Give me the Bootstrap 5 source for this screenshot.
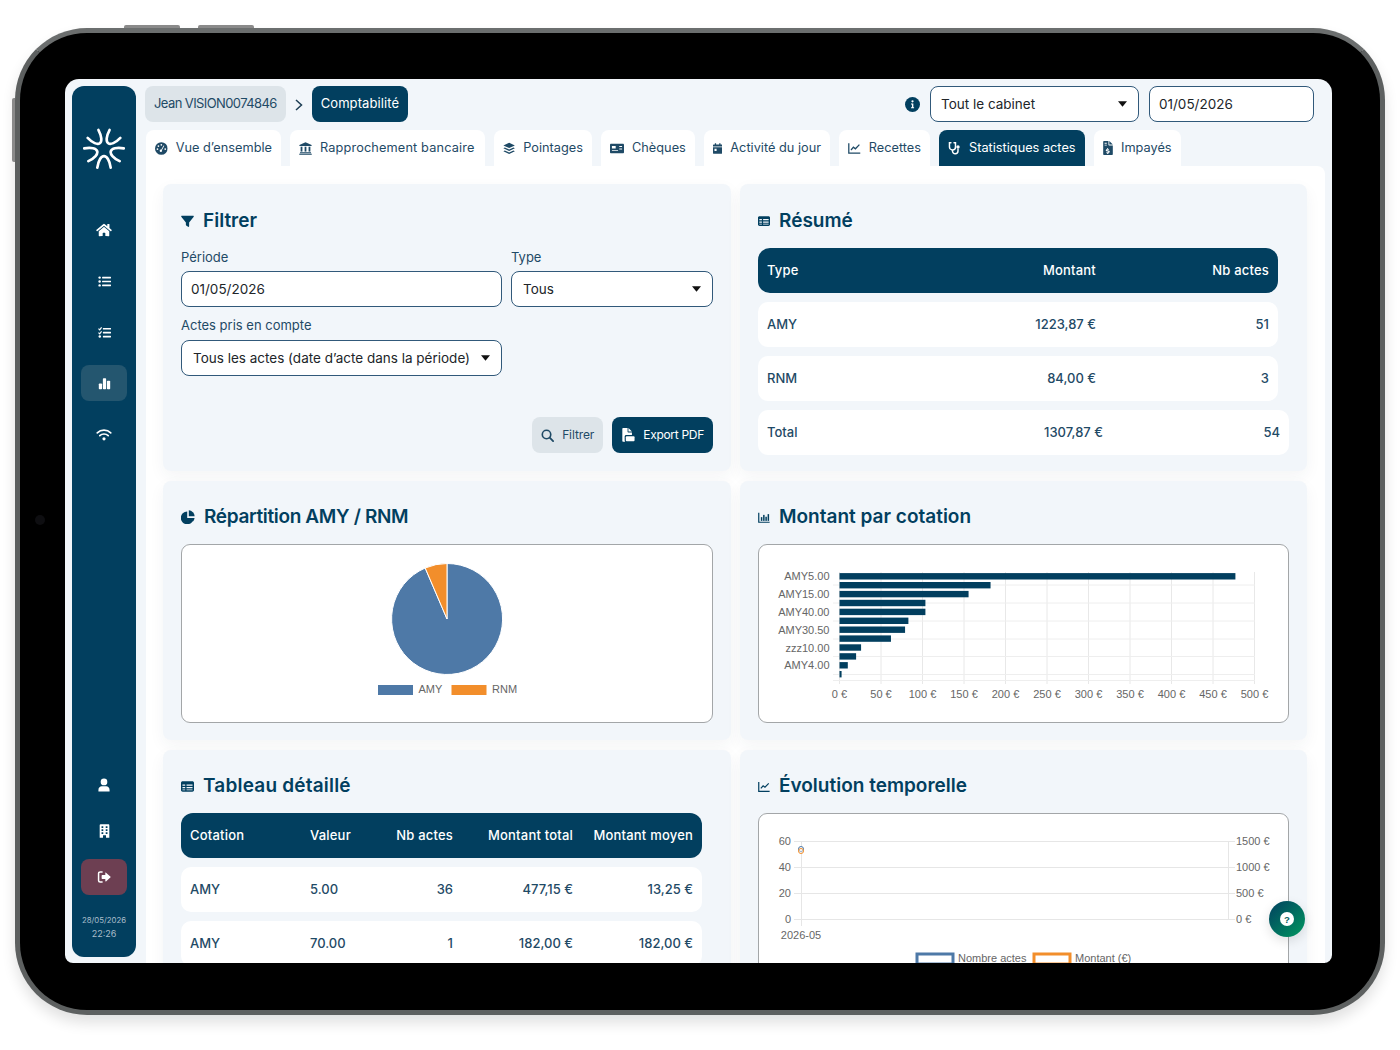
<!DOCTYPE html>
<html lang="fr">
<head>
  <meta charset="UTF-8" />
  <meta name="viewport" content="width=device-width, initial-scale=1.0" />
  <title>Comptabilité - Statistiques actes</title>
  <link href="https://cdn.jsdelivr.net/npm/bootstrap@5.3.3/dist/css/bootstrap.min.css" rel="stylesheet" />
  <style>
    :root { --navy: #023f5f; --ink: #1f4a66; --pale: #f2f6fa; }
    html, body { height: 100%; overflow: hidden; background: #fff; }
    body { font-family: Inter, "Open Sans", sans-serif; font-size: 13px; color: var(--ink); padding: 28px 0 0 15px; }

    /* tablet frame */
    .tablet { position: relative; width: 1370px; height: 987px; padding: 46px 48px 47px 45px; background: #000; border: 5px solid #5d6060; border-top-color: #6b6e6e; border-radius: 72px; box-shadow: 0 8px 14px rgba(0,0,0,.12); }
    .tablet::before, .tablet::after { content: ""; position: absolute; top: -8px; width: 56px; height: 3px; background: #8a8a8a; border-radius: 2px 2px 0 0; }
    .tablet::before { left: 104px; }
    .tablet::after { left: 178px; }
    .side-key { position: absolute; left: -8px; top: 65px; width: 3px; height: 64px; background: #8a8a8a; border-radius: 2px 0 0 2px; }
    .camera-dot { position: absolute; left: 15px; top: 482px; width: 10px; height: 10px; border-radius: 50%; background: #0e0e11; }
    .screen { position: relative; display: flex; height: 884px; width: 1267px; overflow: hidden; background: var(--pale); border-radius: 14px 14px 8px 8px; }

    /* sidebar */
    .rail { flex: 0 0 64px; width: 64px; height: 871px; margin: 7px 0 0 7px; padding: 42px 9px 0; background: var(--navy); border-radius: 12px; color: #fff; }
    .rail-logo { display: block; width: 42px; height: 42px; margin: 0 auto 42px; }
    .rail-btn { display: flex; align-items: center; justify-content: center; height: 36px; border-radius: 8px; color: #fff; }
    .rail-top .rail-btn { margin-bottom: 15px; }
    .rail-low { margin-top: 315px; }
    .rail-low .rail-btn { margin-bottom: 10px; }
    .rail-btn.is-on { background: #24566f; }
    .rail-btn.is-out { background: #6d3f52; }
    .rail-time { margin-top: 19px; text-align: center; font-size: 7.8px; line-height: 13px; color: #a9bdca; }
    .rail-time span { display: block; font-size: 9px; }

    /* header */
    .work { flex: 1 1 auto; min-width: 0; margin-left: 9px; padding-top: 7px; }
    .crumbs { height: 36px; padding-right: 18px; }
    .chip { display: flex; align-items: center; height: 36px; padding: 0 9px; border-radius: 8px; font-size: 13px; white-space: nowrap; }
    .chip-user { background: #dde4e9; letter-spacing: -.6px; }
    .chip-here { background: var(--navy); color: #fff; letter-spacing: .1px; }
    .crumb-sep { width: 26px; text-align: center; }
    .head-select { width: 209px; margin-left: 10px; }
    .head-date { width: 165px; margin-left: 10px; }

    .fld.form-control, .fld.form-select { height: 36px; font-size: 13.5px; color: #212529; border: 1px solid #31597a; border-radius: 8px; padding: 0 0 0 9px; background-color: #fff; box-shadow: none; }
    .fld.form-select { padding-left: 11px; padding-right: 24px; background-image: url("data:image/svg+xml,%3Csvg xmlns='http://www.w3.org/2000/svg' viewBox='0 0 10 6'%3E%3Cpath d='M0 0h10L5 6z' fill='%23111'/%3E%3C/svg%3E"); background-size: 9px 6px; background-position: right 11px center; }
    .fld.head-select { padding-left: 10px; }

    /* tabs */
    .tabbar { display: flex; gap: 9px; margin: 8px 0 0 1px; }
    .tabitem { display: flex; align-items: center; height: 36px; padding: 0 9px; background: #fff; border-radius: 8px 8px 0 0; color: var(--ink); font-size: 12.75px; white-space: nowrap; text-decoration: none; }
    .tabitem svg { margin-right: 8px; }
    .tabitem.is-on { background: var(--navy); color: #fff; }
    .tabitem:nth-child(1) { width: 135px; }
    .tabitem:nth-child(2) { width: 195px; letter-spacing: .13px; }
    .tabitem:nth-child(3) { width: 98px; }
    .tabitem:nth-child(4) { width: 94px; }
    .tabitem:nth-child(5) { width: 126px; }
    .tabitem:nth-child(6) { width: 91px; }
    .tabitem:nth-child(7) { width: 146px; }
    .tabitem:nth-child(8) { width: 87px; }

    /* panel */
    .sheet { height: 800px; width: 1179px; margin-left: 1px; padding: 18px 18px 0 17px; background: #fff; border-radius: 0 8px 0 0; overflow: hidden; }
    .sheet-grid { display: grid; grid-template-columns: 568px 567px; grid-template-rows: 287px 259px 400px; gap: 10px 9px; }
    .tile { padding: 18px; background: var(--pale); border-radius: 8px; box-shadow: 0 6px 16px rgba(40,60,80,.05); }
    .tile-title { display: flex; align-items: center; height: 36px; margin: 0 0 9px; font-family: Inter, sans-serif; font-size: 19px; font-weight: 600; color: var(--navy); }
    .tile-title svg { margin-right: 9px; }
    .tile-title.is-first { padding-top: 2px; margin-bottom: 10px; }
    .tile-title.is-tight { letter-spacing: -.35px; }
    .tile-title.is-wide { letter-spacing: .2px; }
    .fld-label { display: block; height: 15px; margin-bottom: 6px; font-size: 13px; line-height: 15px; color: var(--ink); }
    .filter-row { display: grid; grid-template-columns: 321px 202px; gap: 9px; margin-top: 12px; }
    .filter-row + .filter-row { margin-top: 11px; }
    .filter-row + .filter-row .fld-label { margin-bottom: 7px; }
    .filter-acts { display: flex; justify-content: flex-end; gap: 9px; margin-top: 41px; }
    .act { display: flex; align-items: center; gap: 8px; height: 36px; padding: 0 9px; border: 0; border-radius: 8px; font-size: 12px; letter-spacing: -.1px; }
    .act-soft { background: #dde4e9; color: var(--ink); }
    .act-solid { background: var(--navy); color: #fff; letter-spacing: -.3px; }

    /* tables */
    .dt-row { display: grid; align-items: center; height: 45px; margin-bottom: 9px; padding: 0 9px; background: #fff; border-radius: 10px; font-size: 13px; color: var(--ink); font-weight: 500; }
    .dt-row.dt-head { background: var(--navy); color: #fff; border-radius: 12px; font-weight: 500; letter-spacing: .2px; }
    .dt-sum { width: 520px; grid-template-columns: 1fr 150px 173px; }
    .dt-sum.dt-total { width: 531px; grid-template-columns: 1fr 157px 177px; }
    .dt-full { width: 521px; grid-template-columns: 120px 60px 83px 120px 120px; }

    .plot { background: #fff; border: 1px solid #a3a6a8; border-radius: 9px; overflow: hidden; }
    .plot svg { display: block; font-family: "Liberation Sans", Arial, sans-serif; font-size: 11px; fill: #666; }
    .plot-sm { height: 179px; }
    .plot-lg { height: 300px; }

    .help-fab { position: absolute; left: 1204px; top: 822px; display: flex; align-items: center; justify-content: center; width: 36px; height: 36px; border-radius: 50%; background: linear-gradient(135deg, #024060, #00985f); box-shadow: 0 4px 12px rgba(0,0,0,.12); }
  </style>
</head>
<body>

  <!-- icons -->
  <svg width="0" height="0" class="position-absolute">
    <symbol id="i-home" viewBox="0 0 576 512"><path d="M280.37 148.26L96 300.11V464a16 16 0 0 0 16 16l112.06-.29a16 16 0 0 0 15.92-16V368a16 16 0 0 1 16-16h64a16 16 0 0 1 16 16v95.64a16 16 0 0 0 16 16.05L464 480a16 16 0 0 0 16-16V300L295.67 148.26a12.19 12.19 0 0 0-15.3 0zM571.6 251.47L488 182.56V44.05a12 12 0 0 0-12-12h-56a12 12 0 0 0-12 12v72.61L318.47 43a48 48 0 0 0-61 0L4.34 251.47a12 12 0 0 0-1.6 16.9l25.5 31A12 12 0 0 0 45.15 301l235.22-193.74a12.19 12.19 0 0 1 15.3 0L530.9 301a12 12 0 0 0 16.9-1.6l25.5-31a12 12 0 0 0-1.7-16.93z"/></symbol>
    <symbol id="i-list" viewBox="0 0 16 16"><circle cx="2" cy="3.2" r="1.5"/><circle cx="2" cy="8" r="1.5"/><circle cx="2" cy="12.8" r="1.5"/><rect x="5" y="2.2" width="11" height="2" rx=".5"/><rect x="5" y="7" width="11" height="2" rx=".5"/><rect x="5" y="11.8" width="11" height="2" rx=".5"/></symbol>
    <symbol id="i-tasks" viewBox="0 0 16 16"><path d="M.6 3.2l1.5 1.5L4.4 1.6M.6 8.2l1.5 1.5 2.3-3.1" fill="none" stroke="currentColor" stroke-width="1.4"/><circle cx="2.2" cy="13" r="1.5"/><rect x="6" y="2.4" width="10" height="2" rx=".5"/><rect x="6" y="7.2" width="10" height="2" rx=".5"/><rect x="6" y="12" width="10" height="2" rx=".5"/></symbol>
    <symbol id="i-bars" viewBox="0 0 16 16"><rect x="1" y="8" width="4" height="7" rx="1"/><rect x="6" y="1.5" width="4" height="13.5" rx="1"/><rect x="11" y="4.5" width="4" height="10.5" rx="1"/></symbol>
    <symbol id="i-wifi" viewBox="0 0 16 16"><path d="M.8 6.2c4-3.8 10.4-3.8 14.4 0M3.5 9.2c2.5-2.3 6.5-2.3 9 0" fill="none" stroke="currentColor" stroke-width="1.8" stroke-linecap="round"/><circle cx="8" cy="12.6" r="1.7"/></symbol>
    <symbol id="i-user" viewBox="1 0 14 16"><circle cx="8" cy="4.4" r="3.9"/><path d="M1.5 15.5v-1.6c0-3 2-4.4 3.8-4.4h5.4c1.8 0 3.8 1.4 3.8 4.4v1.6z"/></symbol>
    <symbol id="i-building" viewBox="2 0 12 16"><path fill-rule="evenodd" d="M2.5 1.2C2.5.6 3 .2 3.5.2h9c.5 0 1 .4 1 1v14.6H9.7v-3H6.3v3H2.5zM4.6 2.5v2h2v-2zm0 3.5v2h2V6zm0 3.5v2h2v-2zm4.8-7v2h2v-2zm0 3.5v2h2V6zm0 3.5v2h2v-2z"/></symbol>
    <symbol id="i-logout" viewBox="0 0 16 16"><path d="M5.8 2.2H3.6A1.8 1.8 0 0 0 1.8 4v8a1.8 1.8 0 0 0 1.8 1.8h2.2" fill="none" stroke="currentColor" stroke-width="1.7" stroke-linecap="round"/><path d="M9.5 3.3c0-.4.5-.6.8-.3l5.2 4.6c.2.2.2.6 0 .8L10.3 13c-.3.3-.8.1-.8-.3V10.2H6a.7.7 0 0 1-.7-.7V6.5c0-.4.3-.7.7-.7h3.5z"/></symbol>
    <symbol id="i-gauge" viewBox="0 0 16 16"><circle cx="8" cy="8" r="8"/><g fill="#fff"><circle cx="8" cy="3.3" r="1.1"/><circle cx="4.3" cy="5" r="1.1"/><circle cx="3.1" cy="8.7" r="1.1"/><circle cx="12.9" cy="8.7" r="1.1"/><circle cx="7.4" cy="10.8" r="1.5"/><path d="M10.8 4.1l1 .5-3.3 6-1-.5z"/></g></symbol>
    <symbol id="i-bank" viewBox="0 0 16 16"><path d="M8 .4 15.5 3.6v1.2H.5V3.6z"/><rect x="2" y="5.8" width="2.2" height="6"/><rect x="6.9" y="5.8" width="2.2" height="6"/><rect x="11.8" y="5.8" width="2.2" height="6"/><rect x="1.2" y="12.6" width="13.6" height="1.3"/><rect x=".3" y="14.4" width="15.4" height="1.3"/></symbol>
    <symbol id="i-layers" viewBox="0 0 16 16"><path d="M8 .5 15.5 4 8 7.5.5 4z"/><path d="M2.4 6.8 8 9.4l5.6-2.6 1.9 1L8 11.3.5 7.8z"/><path d="M2.4 10.6 8 13.2l5.6-2.6 1.9 1L8 15.1.5 11.6z"/></symbol>
    <symbol id="i-money" viewBox="0 2 16 12"><path fill-rule="evenodd" d="M1.3 2.5h13.4c.7 0 1.3.6 1.3 1.3v8.4c0 .7-.6 1.3-1.3 1.3H1.3C.6 13.5 0 12.9 0 12.2V3.8c0-.7.6-1.3 1.3-1.3zM2.2 5.2v2.9h4.3V5.2zm0 4.5v1h7v-1zm8.4-4.5v1.1h3.2V5.2zm0 2.7v1.1h3.2V7.9z"/></symbol>
    <symbol id="i-cal" viewBox="1.4 0 13.2 16"><path fill-rule="evenodd" d="M4 .5h1.8v1.8h4.4V.5H12v1.8h1.3c.7 0 1.3.6 1.3 1.3v1.7H1.4V3.6c0-.7.6-1.3 1.3-1.3H4zM1.4 6.4h13.2v7.8c0 .7-.6 1.3-1.3 1.3H2.7c-.7 0-1.3-.6-1.3-1.3zm2.1 2v3h3v-3z"/></symbol>
    <symbol id="i-line" viewBox="0 1 16 14"><path d="M1 2v12.5h14.5" fill="none" stroke="currentColor" stroke-width="1.6"/><path d="M3.8 10.5l3-3.5 2.5 2 5-5.2" fill="none" stroke="currentColor" stroke-width="1.6"/></symbol>
    <symbol id="i-steth" viewBox="0 0 16 16"><path d="M3.6 1.5H1.8v5.2a3.7 3.7 0 0 0 7.4 0V1.5H7.4" fill="none" stroke="currentColor" stroke-width="1.8" stroke-linecap="round"/><path d="M5.5 10.5v1.2a3.4 3.4 0 0 0 6.8 0V9" fill="none" stroke="currentColor" stroke-width="1.8"/><circle cx="12.3" cy="6.8" r="2.1"/></symbol>
    <symbol id="i-invoice" viewBox="3 0 11 16"><path fill-rule="evenodd" d="M3 .8C3 .4 3.4 0 3.8 0H9v4.2c0 .4.3.8.8.8H14v10.2c0 .4-.4.8-.8.8H3.800c-.4 0-.8-.4-.8-.8zM4.600 2v1h2.500V2zm0 2.200v1h2.500v-1zM7.600 8v1c-1.100.2-1.700.8-1.700 1.600 0 1.800 3 1.100 3 2 0 .4-.9.4-1.900 0l-.4 1c.4.2.7.3 1 .3v1h1.300v-1c1-.2 1.600-.8 1.600-1.500 0-1.900-3-1.200-3-2 0-.4.8-.4 1.700 0l.4-1c-.4-.2-.7-.3-1-.3V8z"/><path d="M10 0l4 4h-4z"/></symbol>
    <symbol id="i-info" viewBox="0 0 16 16"><circle cx="8" cy="8" r="8"/><g fill="#fff"><circle cx="8" cy="4.6" r="1.2"/><path d="M6.4 6.8h2.500v4h.8V12H6.400v-1.200h1v-2.800h-1z"/></g></symbol>
    <symbol id="i-filter" viewBox="0 0 16 16"><path d="M.3 2C.1 1.4.5.9 1 .9h14c.5 0 .9.5.7 1.100L10 9.300v4.600c0 .7-.8 1.100-1.300.7L6.400 13c-.3-.2-.4-.5-.4-.8V9.300z"/></symbol>
    <symbol id="i-table" viewBox="0 1.5 16 13"><path fill-rule="evenodd" d="M2 1.5h12c1 0 2 .8 2 1.800v9.400c0 1-1 1.800-2 1.800H2c-1 0-2-.8-2-1.800V3.300c0-1 1-1.800 2-1.800zM1.800 5.400v1.700h3.400V5.400zm5 0v1.700h7.400V5.400zm-5 3.200v1.700h3.400V8.600zm5 0v1.700h7.400V8.600zM1.800 11.700v1h3.400v-1zm5 0v1h7.400v-1z"/></symbol>
    <symbol id="i-pie" viewBox="0 0 16 16"><path d="M7.100 1.700v7.300h7.300A7.300 7.300 0 1 1 7.100 1.700z"/><path d="M8.900.4a7 7 0 0 1 6.700 6.700H8.900z"/><path d="M15.500 9.200a7 7 0 0 1-2 4.300L9 9.200z"/></symbol>
    <symbol id="i-barline" viewBox="0 1 16 14"><path d="M1 1.500v12.800h14.500" fill="none" stroke="currentColor" stroke-width="1.6"/><rect x="3.8" y="7.5" width="2" height="5"/><rect x="6.8" y="4.5" width="2" height="8"/><rect x="9.8" y="7" width="2" height="5.5"/><rect x="12.8" y="3.5" width="2" height="9"/></symbol>
    <symbol id="i-search" viewBox="0 0 16 16"><circle cx="6.8" cy="6.8" r="5.2" fill="none" stroke="currentColor" stroke-width="2"/><path d="M10.700 10.700l4.200 4.200" stroke="currentColor" stroke-width="2.2" stroke-linecap="round"/></symbol>
    <symbol id="i-pdf" viewBox="0 0 16 16"><path d="M1.5.8c0-.4.4-.8.8-.8H7.500v4.200c0 .4.3.8.8.8H12.500v3H6c-1 0-1.800.8-1.800 1.800v4.200c0 .7.2 1.300.6 1.700H2.300c-.4 0-.8-.4-.8-.8z"/><path d="M8.500 0l4 4h-4z"/><rect x="5.5" y="9.500" width="10" height="5.500" rx="1"/></symbol>
  </svg>

  <div class="tablet">
    <span class="side-key"></span>
    <span class="camera-dot"></span>
    <div class="screen">

      <!-- Sidebar -->
      <aside class="rail">
        <svg class="rail-logo" viewBox="-22 -22 44 44" fill="none" stroke="#fff" stroke-width="2.8" stroke-linecap="round">
          <g id="logo-arm"><path d="M-7 19.500C-6 12-3 7.500 0 7.500S6 12 7 19.500"/></g>
          <use href="#logo-arm" transform="rotate(72)"/>
          <use href="#logo-arm" transform="rotate(144)"/>
          <use href="#logo-arm" transform="rotate(216)"/>
          <use href="#logo-arm" transform="rotate(288)"/>
        </svg>
        <div class="rail-top">
          <a class="rail-btn"><svg width="16" height="14" fill="currentColor"><use href="#i-home"/></svg></a>
          <a class="rail-btn"><svg width="13" height="13" fill="currentColor"><use href="#i-list"/></svg></a>
          <a class="rail-btn"><svg width="13" height="13" fill="currentColor"><use href="#i-tasks"/></svg></a>
          <a class="rail-btn is-on"><svg width="13" height="13" fill="currentColor"><use href="#i-bars"/></svg></a>
          <a class="rail-btn"><svg width="16" height="15" fill="currentColor"><use href="#i-wifi"/></svg></a>
        </div>
        <div class="rail-low">
          <a class="rail-btn"><svg width="12" height="14" fill="currentColor"><use href="#i-user"/></svg></a>
          <a class="rail-btn"><svg width="11" height="14" fill="currentColor"><use href="#i-building"/></svg></a>
          <a class="rail-btn is-out"><svg width="14" height="14" fill="currentColor"><use href="#i-logout"/></svg></a>
        </div>
        <div class="rail-time">28/05/2026<span>22:26</span></div>
      </aside>

      <div class="work">
        <!-- Fil d'ariane + filtres globaux -->
        <div class="crumbs d-flex align-items-center">
          <div class="chip chip-user">Jean VISION0074846</div>
          <div class="crumb-sep"><svg width="8" height="12" viewBox="0 0 8 12" fill="none" stroke="#1f3f55" stroke-width="1.5"><path d="M1 1l5.500 5L1 11"/></svg></div>
          <div class="chip chip-here">Comptabilité</div>
          <svg class="ms-auto" width="15" height="15" fill="#023f5f"><use href="#i-info"/></svg>
          <select class="form-select fld head-select"><option>Tout le cabinet</option></select>
          <input class="form-control fld head-date" type="text" value="01/05/2026" />
        </div>

        <!-- Onglets -->
        <nav class="tabbar">
          <a class="tabitem"><svg width="13" height="13" fill="currentColor"><use href="#i-gauge"/></svg>Vue d’ensemble</a>
          <a class="tabitem"><svg width="13" height="13" fill="currentColor"><use href="#i-bank"/></svg>Rapprochement bancaire</a>
          <a class="tabitem"><svg width="13" height="13" fill="currentColor"><use href="#i-layers"/></svg>Pointages</a>
          <a class="tabitem"><svg width="14" height="11" fill="currentColor"><use href="#i-money"/></svg>Chèques</a>
          <a class="tabitem"><svg width="11" height="13" fill="currentColor"><use href="#i-cal"/></svg>Activité du jour</a>
          <a class="tabitem"><svg width="13" height="12" fill="currentColor"><use href="#i-line"/></svg>Recettes</a>
          <a class="tabitem is-on"><svg width="13" height="14" fill="currentColor"><use href="#i-steth"/></svg>Statistiques actes</a>
          <a class="tabitem"><svg width="10" height="14" fill="currentColor"><use href="#i-invoice"/></svg>Impayés</a>
        </nav>

        <div class="sheet">
          <div class="sheet-grid">

            <!-- Filtrer -->
            <section class="tile">
              <h5 class="tile-title is-first"><svg width="13" height="13" fill="currentColor"><use href="#i-filter"/></svg>Filtrer</h5>
              <div class="filter-row">
                <div>
                  <label class="fld-label">Période</label>
                  <input class="form-control fld" type="text" value="01/05/2026" />
                </div>
                <div>
                  <label class="fld-label">Type</label>
                  <select class="form-select fld"><option>Tous</option></select>
                </div>
              </div>
              <div class="filter-row">
                <div>
                  <label class="fld-label">Actes pris en compte</label>
                  <select class="form-select fld"><option>Tous les actes (date d’acte dans la période)</option></select>
                </div>
              </div>
              <div class="filter-acts">
                <button class="act act-soft" type="button"><svg width="13" height="13" fill="currentColor"><use href="#i-search"/></svg>Filtrer</button>
                <button class="act act-solid" type="button"><svg width="14" height="14" fill="currentColor"><use href="#i-pdf"/></svg>Export PDF</button>
              </div>
            </section>

            <!-- Résumé -->
            <section class="tile">
              <h5 class="tile-title is-first"><svg width="12" height="10" fill="currentColor"><use href="#i-table"/></svg>Résumé</h5>
              <div class="dt-row dt-head dt-sum"><span>Type</span><span class="text-end">Montant</span><span class="text-end">Nb actes</span></div>
              <div class="dt-row dt-sum"><span>AMY</span><span class="text-end">1223,87 €</span><span class="text-end">51</span></div>
              <div class="dt-row dt-sum"><span>RNM</span><span class="text-end">84,00 €</span><span class="text-end">3</span></div>
              <div class="dt-row dt-sum dt-total"><span>Total</span><span class="text-end">1307,87 €</span><span class="text-end">54</span></div>
            </section>

            <!-- Répartition -->
            <section class="tile">
              <h5 class="tile-title is-tight"><svg width="14" height="14" fill="currentColor"><use href="#i-pie"/></svg>Répartition AMY / RNM</h5>
              <div class="plot plot-sm">
                <svg width="530" height="177" viewBox="182 545 530 177">
                  <path d="M447 619V563.5A55.5 55.5 0 1 1 425.2 568z" style="fill:#4e79a7" stroke="#fff"/>
                  <path d="M447 619 425.2 568A55.5 55.5 0 0 1 447 563.5z" style="fill:#f28e2b" stroke="#fff"/>
                  <rect x="378" y="685" width="35" height="10" style="fill:#4e79a7"/>
                  <text x="418.5" y="693">AMY</text>
                  <rect x="451.5" y="685" width="35" height="10" style="fill:#f28e2b"/>
                  <text x="492" y="693">RNM</text>
                </svg>
              </div>
            </section>

            <!-- Montant par cotation -->
            <section class="tile">
              <h5 class="tile-title"><svg width="12" height="11" fill="currentColor"><use href="#i-barline"/></svg>Montant par cotation</h5>
              <div class="plot plot-sm">
                <svg id="barChart" width="530" height="177" viewBox="759 545 530 177"></svg>
              </div>
            </section>

            <!-- Tableau détaillé -->
            <section class="tile">
              <h5 class="tile-title is-wide"><svg width="13" height="11" fill="currentColor"><use href="#i-table"/></svg>Tableau détaillé</h5>
              <div class="dt-row dt-head dt-full"><span>Cotation</span><span>Valeur</span><span class="text-end">Nb actes</span><span class="text-end">Montant total</span><span class="text-end">Montant moyen</span></div>
              <div class="dt-row dt-full"><span>AMY</span><span>5.00</span><span class="text-end">36</span><span class="text-end">477,15 €</span><span class="text-end">13,25 €</span></div>
              <div class="dt-row dt-full"><span>AMY</span><span>70.00</span><span class="text-end">1</span><span class="text-end">182,00 €</span><span class="text-end">182,00 €</span></div>
            </section>

            <!-- Évolution -->
            <section class="tile">
              <h5 class="tile-title"><svg width="12" height="11" fill="currentColor"><use href="#i-line"/></svg>Évolution temporelle</h5>
              <div class="plot plot-lg">
                <svg id="lineChart" width="530" height="298" viewBox="759 814 530 298">
                  <g stroke="#e6e6e6" fill="none">
                    <path d="M794 841.5H1235M794 867.5H1235M794 893.5H1235M794 919.5H1235M801.5 841V926M1228.5 841V919"/>
                  </g>
                  <g text-anchor="end">
                    <text x="791" y="845">60</text><text x="791" y="871">40</text><text x="791" y="897">20</text><text x="791" y="923">0</text>
                  </g>
                  <text x="1236" y="845">1500 €</text><text x="1236" y="871">1000 €</text><text x="1236" y="897">500 €</text><text x="1236" y="923">0 €</text>
                  <text x="801" y="939" text-anchor="middle">2026-05</text>
                  <circle cx="801" cy="849" r="2.5" style="fill:#fff" stroke="#4e79a7"/>
                  <circle cx="801" cy="851" r="2.5" style="fill:#fff;fill-opacity:.4" stroke="#f28e2b"/>
                  <rect x="917" y="954" width="36" height="10" style="fill:#fff" stroke="#4e79a7" stroke-width="3"/>
                  <text x="958" y="962">Nombre actes</text>
                  <rect x="1034" y="954" width="36" height="10" style="fill:#fff" stroke="#f28e2b" stroke-width="3"/>
                  <text x="1075" y="962">Montant (€)</text>
                </svg>
              </div>
            </section>

          </div>
        </div>
      </div>

      <div class="help-fab">
        <svg width="14" height="14" viewBox="0 0 16 16"><circle cx="8" cy="8" r="8" fill="#fff"/><text x="8" y="12" text-anchor="middle" font-family="Liberation Sans, sans-serif" font-size="11" font-weight="700" fill="#035f60">?</text></svg>
      </div>
    </div>
  </div>

  <script>
    // bar chart: coordinates are page pixels thanks to the viewBox
    const barData = [477, 182, 155.5, 103.5, 103.5, 83, 79, 62, 26, 20, 10, 2.5];
    const barLabels = { 0: "AMY5.00", 2: "AMY15.00", 4: "AMY40.00", 6: "AMY30.50", 8: "zzz10.00", 10: "AMY4.00" };
    const x0 = 839.5, perEuro = 0.83, top0 = 576.3, pitch = 8.9;
    let out = "";
    for (let i = 0; i <= 10; i++) {
      const x = x0 + i * 50 * perEuro;
      out += `<path d="M${x} 572V684" stroke="#e8e8e8"/>`;
    }
    [585, 603, 621, 639, 656.5, 674.5, 680.5].forEach(y => {
      out += `<path d="M833 ${y}H1255" stroke="#eeeeee"/>`;
    });
    barData.forEach((v, i) => {
      const y = top0 + i * pitch;
      out += `<rect x="${x0}" y="${y - 3.2}" width="${v * perEuro}" height="6.4" style="fill:#023f5f"/>`;
      if (barLabels[i]) out += `<text x="829.5" y="${y + 4}" text-anchor="end">${barLabels[i]}</text>`;
    });
    for (let i = 0; i <= 10; i++) {
      out += `<text x="${x0 + i * 50 * perEuro}" y="698" text-anchor="middle">${i * 50} €</text>`;
    }
    document.getElementById("barChart").innerHTML = out;
  </script>
  <script src="https://cdn.jsdelivr.net/npm/bootstrap@5.3.3/dist/js/bootstrap.bundle.min.js"></script>
</body>
</html>
